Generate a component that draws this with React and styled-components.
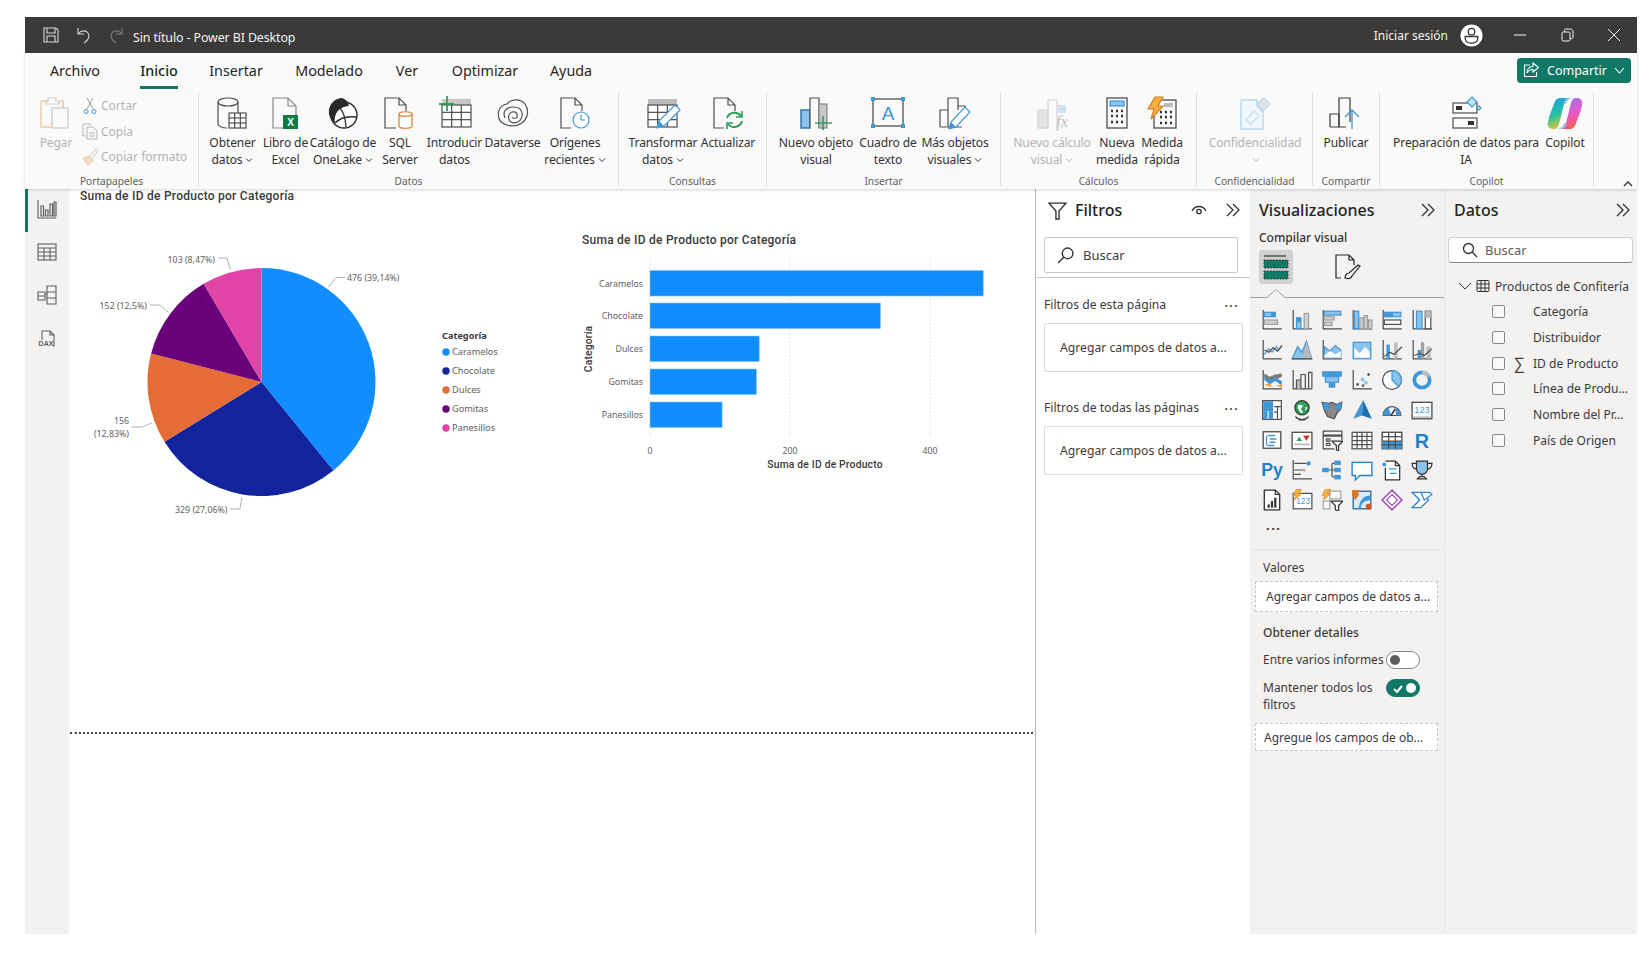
import React from 'react';
import styled, { createGlobalStyle } from 'styled-components';

const INK = '#4f4e4d';
const BLUE = '#3f97d8';
const LIGHT = '#8cc3ec';
const GREEN = '#117865';

const GlobalStyle = createGlobalStyle`
  html, body { margin: 0; padding: 0; background: #fff; }
  body { font-family: "Noto Sans", "Open Sans", "Liberation Sans", sans-serif; color: #252423; }
  * { box-sizing: border-box; }
`;

const Page = styled.div`
  width: 1650px;
  height: 956px;
  padding: 17px 13px 22px 25px;
  display: flex;
  flex-direction: column;
`;

/* ---- title bar ---- */
const TitleBar = styled.header`
  height: 36px;
  flex: none;
  background: #3b3a39;
  color: #f3f2f1;
  display: flex;
  align-items: center;
  padding-left: 17px;
  font-size: 12.4px;
`;
const QuickIcon = styled.svg`
  width: 18px;
  height: 18px;
  margin-right: ${p => p.$gap}px;
  fill: none;
  stroke: ${p => (p.$dim ? '#7d7b79' : '#d8d6d4')};
  stroke-width: 1.1;
`;
const DocTitle = styled.span`
  letter-spacing: -0.1px;
  padding-top: 4px;
`;
const Account = styled.div`
  margin-left: auto;
  display: flex;
  align-items: center;
`;
const SignIn = styled.span`
  margin-right: 12px;
  padding-top: 1px;
  font-size: 12px;
`;
const Avatar = styled.svg`
  width: 23px;
  height: 23px;
  margin-right: 30px;
`;
const WinIcon = styled.svg`
  width: 14px;
  height: 14px;
  margin-right: ${p => p.$gap}px;
  fill: none;
  stroke: #f3f2f1;
  stroke-width: 1;
`;

/* ---- ribbon ---- */
const Header = styled.div`
  flex: none;
  height: 136px;
  background: #fafafa;
  box-shadow: 0 1px 3px rgba(0, 0, 0, 0.18);
  position: relative;
  z-index: 2;
  display: flex;
  flex-direction: column;
`;
const TabRow = styled.nav`
  height: 39px;
  display: flex;
  align-items: center;
  padding-left: 5px;
  padding-right: 6px;
  flex: none;
`;
const Tab = styled.div`
  width: ${p => p.$w}px;
  display: flex;
  justify-content: center;
  font-size: 14.3px;
  padding-top: 3px;
`;
const TabLabel = styled.span`
  line-height: 24px;
  height: 30px;
  font-weight: ${p => (p.$active ? 500 : 400)};
  border-bottom: 3px solid ${p => (p.$active ? GREEN : 'transparent')};
`;
const ShareButton = styled.button`
  margin-left: auto;
  width: 114px;
  height: 25px;
  margin-top: -5px;
  border: 0;
  border-radius: 4px;
  background: ${GREEN};
  color: #fff;
  font: inherit;
  font-size: 12.5px;
  display: flex;
  align-items: center;
  justify-content: center;
  gap: 7px;
`;
const Ribbon = styled.div`
  flex: 1;
  display: flex;
`;
const Group = styled.section`
  width: ${p => p.$w}px;
  height: 94px;
  flex: none;
  border-right: 1px solid #e1dfdd;
  padding-left: 8px;
  display: flex;
  flex-direction: column;
`;
const GroupRow = styled.div`
  display: flex;
  padding-top: 4px;
`;
const GroupLabel = styled.div`
  margin-top: auto;
  margin-left: -8px;
  height: 14px;
  line-height: 14px;
  font-size: 10.2px;
  color: #605e5c;
  text-align: center;
  transform: translateY(2px);
`;
const BigButton = styled.div`
  width: ${p => p.$w}px;
  flex: none;
  display: flex;
  flex-direction: column;
  align-items: center;
  color: ${p => (p.$off ? '#b5b3b1' : '#323130')};
`;
const BigIcon = styled.svg`
  width: 36px;
  height: 36px;
  fill: none;
  stroke-width: 1.2;
  flex: none;
`;
const BigLabel = styled.div`
  margin-top: 2px;
  font-size: 12.1px;
  line-height: 17px;
  text-align: center;
  white-space: nowrap;
  letter-spacing: -0.15px;
`;
const Caret = styled.svg`
  width: 8px;
  height: 6px;
  margin-left: 3px;
  vertical-align: 1px;
  fill: none;
  stroke: currentColor;
  stroke-width: 1;
`;
const SmallStack = styled.div`
  margin-left: 3px;
  margin-top: -3px;
  display: flex;
  flex-direction: column;
`;
const SmallButton = styled.div`
  height: 25.5px;
  display: flex;
  align-items: center;
  gap: 3px;
  font-size: 12px;
  color: #b5b3b1;
  white-space: nowrap;
`;
const SmallIcon = styled.svg`
  width: 16px;
  height: 18px;
  fill: none;
  stroke-width: 1;
`;
const Collapse = styled.div`
  flex: 1;
  display: flex;
  align-items: flex-end;
  justify-content: flex-end;
  padding: 0 4px 2px 0;
`;
const CollapseIcon = styled.svg`
  width: 10px;
  height: 7px;
  fill: none;
  stroke: #323130;
  stroke-width: 1.4;
`;

/* ---- body ---- */
const Body = styled.main`
  flex: 1;
  display: flex;
  min-height: 0;
`;
const Rail = styled.aside`
  width: 44px;
  flex: none;
  background: #f3f2f1;
  display: flex;
  flex-direction: column;
`;
const RailItem = styled.div`
  height: 43px;
  padding: 0 3px 3px 0;
  display: flex;
  align-items: center;
  justify-content: center;
  border-left: 3px solid ${p => (p.$active ? GREEN : 'transparent')};
`;
const RailIcon = styled.svg`
  width: 22px;
  height: 22px;
  fill: none;
  stroke: #605e5c;
  stroke-width: 1.1;
`;
const Canvas = styled.div`
  width: 966px;
  flex: none;
  background: #fff;
  display: flex;
  flex-direction: column;
`;
const VisualTitle = styled.div`
  font-family: Roboto, "Noto Sans", sans-serif;
  font-size: 12px;
  font-weight: 500;
  line-height: 14px;
  letter-spacing: 0.25px;
  color: #3b3a39;
  margin-left: ${p => p.$left}px;
`;
const Charts = styled.div`
  display: flex;
  height: 320px;
`;
const PieSvg = styled.svg`
  width: 491px;
  height: 320px;
  flex: none;
  display: block;
`;
const BarVisual = styled.div`
  padding-top: 30px;
  flex: 1;
`;
const BarSvg = styled.svg`
  width: 470px;
  height: 225px;
  margin-top: 3px;
  display: block;
`;
const PageEnd = styled.div`
  margin: 209px 2px 0 1px;
  border-top: 2px dotted #444;
`;

/* ---- filters ---- */
const FilterPane = styled.aside`
  width: 215px;
  flex: none;
  background: #fff;
  border-left: 1px solid #b9b7b5;
  display: flex;
  flex-direction: column;
`;
const PaneHead = styled.div`
  height: 42px;
  padding: 0 ${p => p.$right || 9}px 0 ${p => p.$left}px;
  display: flex;
  align-items: center;
  font-size: 16px;
  font-weight: 500;
  flex: none;
`;
const HeadIcon = styled.svg`
  width: ${p => p.$size || 16}px;
  height: ${p => p.$size || 16}px;
  flex: none;
  fill: none;
  stroke: #323130;
  stroke-width: 1.3;
  margin-left: ${p => (p.$push ? 'auto' : '0')};
  margin-right: ${p => p.$gap || 0}px;
`;
const FilterSearch = styled.div`
  margin: 6px 12px 4px 8px;
  height: 36px;
  border: 1px solid #c8c6c4;
  border-radius: 2px;
  display: flex;
  align-items: center;
  gap: 9px;
  padding-left: 12px;
  font-size: 13px;
  color: #3b3a39;
`;
const Divider = styled.div`
  border-top: 1px solid #c8c6c4;
`;
const FilterHeading = styled.div`
  margin: ${p => p.$top}px 11px 0 8px;
  height: 20px;
  line-height: 20px;
  display: flex;
  justify-content: space-between;
  font-size: 12.2px;
  color: #3b3a39;
`;
const HeadingDots = styled.span`
  letter-spacing: 1.5px;
  font-weight: 600;
  line-height: 16px;
`;
const FilterCard = styled.div`
  margin: 8px 7px 0 8px;
  height: 49px;
  border: 1px solid #dcdad8;
  border-radius: 2px;
  padding-left: 15px;
  display: flex;
  align-items: center;
  font-size: 12.2px;
  color: #3b3a39;
  white-space: nowrap;
`;

/* ---- visualizations ---- */
const VizPane = styled.aside`
  width: 195px;
  flex: none;
  background: #f3f2f1;
  border-right: 1px solid #e8e6e4;
  display: flex;
  flex-direction: column;
`;
const Subhead = styled.div`
  margin: -1px 0 0 9px;
  height: 16px;
  line-height: 16px;
  font-size: 12px;
  font-weight: 500;
  color: #323130;
`;
const ModeTabs = styled.div`
  display: flex;
  margin: 4px 0 0 9px;
  height: 34px;
  align-items: center;
  flex: none;
`;
const ModeTile = styled.div`
  width: 34px;
  height: 34px;
  background: #d2d0ce;
  border-radius: 3px;
  display: flex;
  align-items: center;
  justify-content: center;
`;
const ModeIcon = styled.svg`
  width: ${p => p.$size}px;
  height: ${p => p.$size}px;
  fill: none;
  margin-left: ${p => p.$left || 0}px;
`;
const Notch = styled.svg`
  display: block;
  width: 194px;
  height: 10px;
  margin-top: 4px;
  flex: none;
  fill: none;
  stroke: #a19f9d;
  stroke-width: 1;
`;
const Gallery = styled.div`
  display: grid;
  grid-template-columns: repeat(6, 30px);
  grid-auto-rows: 30px;
  padding: 7px 0 0 7px;
  justify-items: center;
  align-items: center;
`;
const GalleryIcon = styled.svg`
  width: 22px;
  height: 22px;
  fill: none;
  stroke-width: 1.1;
`;
const MoreDots = styled.div`
  margin: -1px 0 0 16px;
  height: 26px;
  line-height: 22px;
  font-size: 13px;
  letter-spacing: 1.5px;
  color: #323130;
  font-weight: 700;
`;
const WellsRule = styled.div`
  border-top: 2px solid #edebe9;
  margin-top: 9px;
`;
const WellLabel = styled.div`
  margin: ${p => p.$top}px 0 0 13px;
  font-size: 12px;
  line-height: 17px;
  font-weight: ${p => (p.$bold ? 500 : 400)};
  color: #3b3a39;
`;
const Well = styled.div`
  margin: ${p => p.$top}px 6px 0 5px;
  height: ${p => p.$h}px;
  background: #fff;
  border: 1px dashed #c8c6c4;
  border-radius: 1px;
  display: flex;
  align-items: center;
  padding-left: ${p => p.$pad}px;
  font-size: 12px;
  color: #3b3a39;
  white-space: nowrap;
`;
const SwitchRow = styled.div`
  margin: ${p => p.$top}px 0 0 13px;
  width: 157px;
  display: flex;
  justify-content: space-between;
  font-size: 12px;
  line-height: 17px;
  color: #3b3a39;
`;
const SwitchText = styled.span`
  width: 122px;
  white-space: ${p => (p.$wrap ? 'normal' : 'nowrap')};
`;
const Switch = styled.span`
  width: 34px;
  height: 18px;
  flex: none;
  border-radius: 9px;
  border: 1px solid ${p => (p.$on ? GREEN : '#8a8886')};
  background: ${p => (p.$on ? GREEN : '#fff')};
  display: flex;
  align-items: center;
  justify-content: ${p => (p.$on ? 'flex-end' : 'flex-start')};
  gap: 3px;
  padding: 0 3px;
  &::after {
    content: '';
    width: 10px;
    height: 10px;
    border-radius: 50%;
    background: ${p => (p.$on ? '#fff' : '#605e5c')};
  }
`;
const SwitchCheck = styled.svg`
  width: 10px;
  height: 9px;
  fill: none;
  stroke: #fff;
  stroke-width: 2;
`;

/* ---- data ---- */
const DataPane = styled.aside`
  flex: 1;
  background: #f3f2f1;
  display: flex;
  flex-direction: column;
`;
const DataSearch = styled.div`
  margin: 6px 4px 0 3px;
  height: 26px;
  background: #fff;
  border: 1px solid #d2d0ce;
  border-bottom-color: #8a8886;
  border-radius: 4px;
  display: flex;
  align-items: center;
  gap: 7px;
  padding-left: 13px;
  font-size: 13px;
  color: #605e5c;
`;
const TableRow = styled.div`
  margin-top: 10px;
  height: 26px;
  padding-left: 13px;
  display: flex;
  align-items: center;
  font-size: 12.1px;
  color: #3b3a39;
  white-space: nowrap;
`;
const TreeIcon = styled.svg`
  width: 14px;
  height: 14px;
  flex: none;
  fill: none;
  stroke: #323130;
  stroke-width: 1;
  margin-right: ${p => p.$gap}px;
`;
const FieldRow = styled.div`
  height: 25.7px;
  padding-left: 47px;
  display: flex;
  align-items: center;
  font-size: 12.1px;
  color: #3b3a39;
  white-space: nowrap;
`;
const Check = styled.span`
  width: 13px;
  height: 13px;
  flex: none;
  border: 1px solid #8a8886;
  border-radius: 2px;
  background: #f9f8f7;
`;
const SigmaSlot = styled.span`
  width: 28px;
  flex: none;
  text-align: center;
  font-size: 16px;
  line-height: 16px;
`;

/* ---- small shared drawings ---- */
const Down = () => (
  <Caret viewBox="0 0 8 6"><path d="M1 1.5l3 3 3-3" /></Caret>
);
const Chevrons = ({ push, gap }) => (
  <HeadIcon viewBox="0 0 16 16" $push={push} $gap={gap}>
    <path d="M2 2l6 6-6 6M8 2l6 6-6 6" />
  </HeadIcon>
);
const Lens = ({ flip }) => (
  <HeadIcon viewBox="0 0 16 16" $size={flip ? 17 : 16}>
    {flip ? <><circle cx="10" cy="6" r="5" /><path d="M6.4 9.6L1 15" /></> : <><circle cx="6.5" cy="6.5" r="5" /><path d="M10 10l5 5" /></>}
  </HeadIcon>
);

const page = 'M5 2h15l8 8v22H5z';
const fold = 'M20 2v8h8';
const GridLines = ({ x, y, w, h, c = INK, nx = 3, ny = 3 }) => (
  <g stroke={c}>
    <rect x={x} y={y} width={w} height={h} fill="#fff" />
    {Array.from({ length: nx - 1 }, (_, i) => <path key={i} d={`M${x + (w / nx) * (i + 1)} ${y}v${h}`} />)}
    {Array.from({ length: ny - 1 }, (_, i) => <path key={i} d={`M${x} ${y + (h / ny) * (i + 1)}h${w}`} />)}
  </g>
);

const ribbonIcons = {
  paste: (
    <>
      <path d="M3 5h8M21 5h4v7M3 5v26h12" stroke="#f0d9b8" strokeWidth="2" />
      <path d="M10 5V2h8v3h3v3H8V5z" stroke="#cfcdcb" />
      <rect x="14" y="12" width="16" height="20" stroke="#c8c6c4" fill="#fafafa" />
    </>
  ),
  data: (
    <>
      <ellipse cx="13" cy="6" rx="10" ry="4" stroke={INK} />
      <path d="M3 6v22c0 2 4 4 9 4M23 6v11" stroke={INK} />
      <GridLines x={14} y={17} w={17} h={15} />
    </>
  ),
  excel: (
    <>
      <path d={page} stroke="#8a8886" /><path d={fold} stroke="#8a8886" />
      <rect x="15" y="19" width="15" height="14" fill="#107c41" />
      <text x="22.5" y="30" fontSize="10" fontWeight="700" fill="#fff" textAnchor="middle" fontFamily="Liberation Sans">X</text>
    </>
  ),
  lake: (
    <>
      <circle cx="19" cy="19" r="13" stroke="#2b2a29" strokeWidth="1.4" fill="#fff" />
      <path d="M16 2C8 3 3 10 4 18c1 5 3 8 6 9-1-6 1-11 5-14 3-2 6-3 9-3-1-4-4-8-8-8z" fill="#2b2a29" />
      <path d="M13 11c4 2 7 7 8 20M10 27c5-5 12-7 21-6" stroke="#2b2a29" strokeWidth="1.3" />
    </>
  ),
  sql: (
    <>
      <path d="M14 32H3V2h14l7 7v6M17 2v7h7" stroke={INK} />
      <path d="M17 18c0-3 13-3 13 0v12c0 3-13 3-13 0z" stroke="#d67f2c" fill="#fff" />
      <path d="M17 18c0 3 13 3 13 0" stroke="#d67f2c" />
    </>
  ),
  enter: (
    <>
      <rect x="5" y="3" width="29" height="6" fill="#c8c6c4" />
      <GridLines x={5} y={9} w={29} h={22} />
      <path d="M10 0v15M2 8h15" stroke="#2e9e58" strokeWidth="1.8" />
    </>
  ),
  verse: (
    <g stroke={INK}>
      <path d="M6 26C1 20 3 9 12 8c5-6 14-5 18 0 5 7 2 15-3 19-6 4-15 4-21-1z" />
      <path d="M10 22c-3-7 2-11 8-11 7 0 10 4 9 9-1 6-7 8-11 6-3-2-4-8 1-10 4-1 6 2 5 5-1 2-4 2-5 0" />
    </g>
  ),
  recent: (
    <>
      <path d="M14 32H4V2h14l7 7v6M18 2v7h7" stroke={INK} />
      <circle cx="24" cy="24" r="8" stroke={BLUE} fill="#fff" />
      <path d="M24 19v5h4" stroke={BLUE} />
    </>
  ),
  transform: (
    <>
      <rect x="3" y="3" width="29" height="6" fill="#bdbbb9" />
      <GridLines x={3} y={9} w={29} h={22} />
      <path d="M12 32l2-7 16-16 5 5-16 16z" fill="#fff" stroke={BLUE} />
      <path d="M12 32l2-7 5 5z" fill={BLUE} />
    </>
  ),
  refresh: (
    <>
      <path d="M14 32H4V2h14l7 7v6M18 2v7h7" stroke={INK} />
      <path d="M17 22a8 8 0 0 1 14-2M32 25a8 8 0 0 1-14 3" stroke="#2e9e58" strokeWidth="2" />
      <path d="M32 15v6h-6M17 33v-6h6" stroke="#2e9e58" strokeWidth="1.6" />
    </>
  ),
  newVisual: (
    <>
      <rect x="3" y="14" width="9" height="18" fill={LIGHT} stroke="#2b6fa8" strokeWidth="1.4" />
      <path d="M12 32V2h9v30" stroke={INK} fill="#fafafa" />
      <rect x="21" y="8" width="8" height="24" fill="#c8c6c4" stroke="#8a8886" />
      <path d="M25 20v14M17 27h17" stroke="#2e9e58" strokeWidth="1.6" />
    </>
  ),
  textBox: (
    <>
      <rect x="3" y="3" width="30" height="27" stroke={INK} strokeWidth="1.3" />
      <rect x="1" y="1" width="4" height="4" fill={BLUE} /><rect x="31" y="1" width="4" height="4" fill={BLUE} />
      <rect x="1" y="28" width="4" height="4" fill={BLUE} /><rect x="31" y="28" width="4" height="4" fill={BLUE} />
      <text x="18" y="24" fontSize="19" fill={BLUE} textAnchor="middle" fontFamily="Liberation Sans">A</text>
    </>
  ),
  moreVisuals: (
    <>
      <path d="M3 31V14h8M11 31V2h10v12M21 10h7v8M3 31h22" stroke={INK} />
      <path d="M12 33l2-7 14-15 5 5-14 15z" fill="#fff" stroke={BLUE} />
      <path d="M12 33l2-7 5 5z" fill={BLUE} />
    </>
  ),
  fx: (
    <>
      <rect x="4" y="14" width="10" height="18" fill="#e1dfdd" stroke="#d2d0ce" />
      <path d="M14 32V4h9v28" stroke="#d2d0ce" />
      <rect x="23" y="9" width="9" height="8" fill="#c7e0f4" />
      <text x="28" y="31" fontSize="16" fontStyle="italic" fill="#b5b3b1" textAnchor="middle" fontFamily="Liberation Serif">fx</text>
    </>
  ),
  calc: (
    <>
      <rect x="8" y="2" width="20" height="30" stroke={INK} strokeWidth="1.3" />
      <rect x="11" y="5" width="14" height="5" fill={LIGHT} stroke={BLUE} />
      <path d="M12 15h2M17 15h2M22 15h2M12 20h2M17 20h2M22 20h2M12 26h2M17 26h2M22 26h2" stroke="#323130" strokeWidth="2.4" />
    </>
  ),
  quick: (
    <>
      <rect x="10" y="4" width="22" height="28" stroke={INK} strokeWidth="1.3" />
      <rect x="20" y="7" width="9" height="4" fill="#bdbbb9" />
      <path d="M16 16h2M21 16h2M26 16h2M16 21h2M21 21h2M26 21h2M16 27h2M21 27h2M26 27h2" stroke="#323130" strokeWidth="2.4" />
      <path d="M11 1h8l-5 9h5L7 23l3-10H4z" fill="#f5b041" stroke="#d67f2c" />
    </>
  ),
  label: (
    <>
      <path d="M4 4h16v6l6 6v17H4z" stroke="#a9d3f2" fill="#f0f7fd" strokeWidth="1.4" />
      <path d="M9 24l8-9 5 5-8 8z" stroke="#bcdcf5" strokeWidth="1.4" />
      <path d="M20 8l7-6 6 6-7 7z" fill="#e1dfdd" stroke="#a9d3f2" />
    </>
  ),
  publish: (
    <>
      <path d="M2 31V18h9M11 31V2h11v24M2 31h16" stroke="#3b3a39" strokeWidth="1.2" />
      <path d="M11 18v13" stroke="#3b3a39" strokeWidth="1.2" />
      <path d="M24 33V14M17 21l7-7 7 7" stroke={BLUE} strokeWidth="1.3" />
    </>
  ),
  prep: (
    <>
      <rect x="5" y="7" width="24" height="10" stroke={INK} /><rect x="8" y="10" width="6" height="4" fill="#323130" />
      <rect x="5" y="22" width="24" height="10" stroke={INK} /><rect x="20" y="25" width="6" height="4" fill="#323130" />
      <path d="M24 1l5 5-5 5-5-5z" fill="#c7e0f4" stroke={BLUE} />
      <path d="M31 10l2 2-2 2-2-2z" fill="#fff" stroke={BLUE} />
    </>
  ),
  copilot: (
    <>
      <defs>
        <linearGradient id="copL" x1="0.2" y1="0" x2="0.5" y2="1">
          <stop offset="0" stopColor="#1f9fe8" /><stop offset="0.55" stopColor="#25c2a0" /><stop offset="1" stopColor="#f6c42c" />
        </linearGradient>
        <linearGradient id="copR" x1="0.3" y1="0" x2="0.6" y2="1">
          <stop offset="0" stopColor="#9b6cf0" /><stop offset="0.55" stopColor="#e85bc3" /><stop offset="1" stopColor="#f5603c" />
        </linearGradient>
      </defs>
      <path d="M14 2h8c-3 1-4 3-5 6l-5 20c-1 3-2 5-5 5H6c-4 0-6-3-5-7 1-6 4-13 6-18 1-4 3-6 7-6z" fill="url(#copL)" />
      <path d="M22 33h-8c3-1 4-3 5-6l5-20c1-3 2-5 5-5h1c4 0 6 3 5 7-1 6-4 13-6 18-1 4-3 6-7 6z" fill="url(#copR)" />
      <path d="M19 8c1-3 3-5 6-6h-3c-3 0-5 2-6 5zM17 27c-1 3-3 5-6 6h3c3 0 5-2 6-5z" fill="#7fb7f0" opacity="0.7" />
    </>
  ),
};

const Big = ({ w, icon, lines, caret, off }) => (
  <BigButton $w={w} $off={off}>
    <BigIcon viewBox="0 0 36 36" opacity={off ? 0.85 : 1}>{ribbonIcons[icon]}</BigIcon>
    <BigLabel>
      {lines.map((line, i) => (
        <div key={line}>
          {line}
          {caret && i === lines.length - 1 && <Down />}
        </div>
      ))}
    </BigLabel>
  </BigButton>
);

const tabs = [
  ['Archivo', 90], ['Inicio', 78], ['Insertar', 76], ['Modelado', 110], ['Ver', 46], ['Optimizar', 110], ['Ayuda', 62],
];

const groups = [
  {
    name: 'Datos', w: 420, buttons: [
      { w: 51, icon: 'data', lines: ['Obtener', 'datos'], caret: true },
      { w: 55, icon: 'excel', lines: ['Libro de', 'Excel'] },
      { w: 60, icon: 'lake', lines: ['Catálogo de', 'OneLake'], caret: true },
      { w: 54, icon: 'sql', lines: ['SQL', 'Server'] },
      { w: 55, icon: 'enter', lines: ['Introducir', 'datos'] },
      { w: 61, icon: 'verse', lines: ['Dataverse'] },
      { w: 64, icon: 'recent', lines: ['Orígenes', 'recientes'], caret: true },
    ],
  },
  {
    name: 'Consultas', w: 148, buttons: [
      { w: 72, icon: 'transform', lines: ['Transformar', 'datos'], caret: true },
      { w: 58, icon: 'refresh', lines: ['Actualizar'] },
    ],
  },
  {
    name: 'Insertar', w: 234, buttons: [
      { w: 82, icon: 'newVisual', lines: ['Nuevo objeto', 'visual'] },
      { w: 62, icon: 'textBox', lines: ['Cuadro de', 'texto'] },
      { w: 72, icon: 'moreVisuals', lines: ['Más objetos', 'visuales'], caret: true },
    ],
  },
  {
    name: 'Cálculos', w: 196, buttons: [
      { w: 86, icon: 'fx', lines: ['Nuevo cálculo', 'visual'], caret: true, off: true },
      { w: 44, icon: 'calc', lines: ['Nueva', 'medida'] },
      { w: 46, icon: 'quick', lines: ['Medida', 'rápida'] },
    ],
  },
  {
    name: 'Confidencialidad', w: 116, buttons: [
      { w: 100, icon: 'label', lines: ['Confidencialidad', ''], caret: true, off: true },
    ],
  },
  {
    name: 'Compartir', w: 67, buttons: [
      { w: 50, icon: 'publish', lines: ['Publicar'] },
    ],
  },
  {
    name: 'Copilot', w: 214, buttons: [
      { w: 156, icon: 'prep', lines: ['Preparación de datos para', 'IA'] },
      { w: 42, icon: 'copilot', lines: ['Copilot'] },
    ],
  },
];

/* pie chart */
const slices = [
  { name: 'Caramelos', value: 476, color: '#118DFF' },
  { name: 'Chocolate', value: 329, color: '#12239E' },
  { name: 'Dulces', value: 156, color: '#E66C37' },
  { name: 'Gomitas', value: 152, color: '#6B007B' },
  { name: 'Panesillos', value: 103, color: '#E044A7' },
];
const total = slices.reduce((s, x) => s + x.value, 0);
const CX = 261.5;
const CY = 382;
const R = 114;
let acc = 0;
const arcs = slices.map(s => {
  const a0 = (acc / total) * Math.PI * 2;
  acc += s.value;
  const a1 = (acc / total) * Math.PI * 2;
  const pt = a => `${(CX + R * Math.sin(a)).toFixed(2)} ${(CY - R * Math.cos(a)).toFixed(2)}`;
  return { ...s, d: `M${CX} ${CY}L${pt(a0)}A${R} ${R} 0 ${a1 - a0 > Math.PI ? 1 : 0} 1 ${pt(a1)}Z` };
});
const legendY = [352, 371, 390, 409, 428];
const pieLabels = [
  { t: '476 (39,14%)', x: 347, y: 281, a: 'start', l: 'M328.4 287L336 277.5H345' },
  { t: '103 (8,47%)', x: 215, y: 263, a: 'end', l: 'M218 258H227L230.5 270' },
  { t: '152 (12,5%)', x: 147, y: 309, a: 'end', l: 'M150 305H160L168 312' },
  { t: '156', x: 129, y: 424, a: 'end', l: 'M131.5 427H141.6L152 423' },
  { t: '(12,83%)', x: 129, y: 437, a: 'end' },
  { t: '329 (27,06%)', x: 227.5, y: 513, a: 'end', l: 'M230 509H240L242 497' },
];

/* bar chart */
const barTop = [270.5, 303, 336, 369, 402];
const barScale = 0.7;

const chartFont = '"Noto Sans", "Open Sans", sans-serif';

const PieChart = () => (
  <PieSvg viewBox="69 203 491 320" fontFamily={chartFont}>
    {arcs.map(a => <path key={a.name} d={a.d} fill={a.color} />)}
    {pieLabels.map(l => (
      <g key={l.t}>
        {l.l && <path d={l.l} fill="none" stroke="#a19f9d" strokeWidth="0.8" />}
        <text x={l.x} y={l.y} fontSize="8.8" fill="#605e5c" textAnchor={l.a}>{l.t}</text>
      </g>
    ))}
    <text x="442" y="339" fontSize="9.2" fontWeight="700" fill="#3b3a39">Categoría</text>
    {arcs.map((a, i) => (
      <g key={a.name}>
        <circle cx="446" cy={legendY[i]} r="3.7" fill={a.color} />
        <text x="452" y={legendY[i] + 3} fontSize="9.2" fill="#605e5c">{a.name}</text>
      </g>
    ))}
  </PieSvg>
);

const BarChart = () => (
  <BarSvg viewBox="560 250 470 225" fontFamily={chartFont}>
    {[0, 200, 400].map(v => (
      <g key={v}>
        <path d={`M${650 + v * barScale} 257V438`} stroke="#d6d4d2" strokeWidth="0.8" strokeDasharray="1.5 2" />
        <text x={650 + v * barScale} y="454" fontSize="8.8" fill="#605e5c" textAnchor="middle">{v}</text>
      </g>
    ))}
    {slices.map((s, i) => (
      <g key={s.name}>
        <rect x="650" y={barTop[i]} width={s.value * barScale} height="25.5" fill="#118DFF" stroke="#7fc2ff" strokeWidth="0.6" />
        <text x="643" y={barTop[i] + 16} fontSize="8.8" fill="#605e5c" textAnchor="end">{s.name}</text>
      </g>
    ))}
    <text x="825" y="468" fontSize="10.3" fontWeight="500" fill="#3b3a39" textAnchor="middle" fontFamily="Roboto, sans-serif" letterSpacing="0.2">Suma de ID de Producto</text>
    <text transform="translate(592 349) rotate(-90)" fontSize="10.3" fontWeight="500" fill="#3b3a39" textAnchor="middle" fontFamily="Roboto, sans-serif" letterSpacing="0.2">Categoría</text>
  </BarSvg>
);

/* gallery */
const axis = <path d="M2 1v17h17" stroke={INK} />;
const box = <rect x="2" y="2.5" width="16" height="15" stroke={INK} strokeWidth="1.2" fill="#fff" />;
const Rect = ({ x, y, w, h, c = BLUE, s }) => <rect x={x} y={y} width={w} height={h} fill={c} stroke={s} />;
const gallery = [
  <>{axis}<Rect x={3} y={3} w={10} h={4} c={LIGHT} s={BLUE} /><Rect x={9} y={3} w={4} h={4} /><Rect x={3} y={10} w={12} h={4} c="#d2d0ce" s="#a19f9d" /></>,
  <>{axis}<Rect x={5} y={8} w={4} h={10} c={LIGHT} s={BLUE} /><Rect x={5} y={8} w={4} h={4} /><Rect x={12} y={4} w={4} h={14} c="#d2d0ce" s="#a19f9d" /></>,
  <>{axis}<Rect x={3} y={2} w={15} h={3.5} c={LIGHT} s={BLUE} /><Rect x={3} y={7} w={9} h={3} c="#d2d0ce" s="#a19f9d" /><Rect x={3} y={12} w={7} h={3} c="#d2d0ce" s="#a19f9d" /></>,
  <>{axis}<Rect x={3} y={2} w={4} h={16} c={LIGHT} s={BLUE} /><Rect x={8} y={8} w={3} h={10} c="#d2d0ce" s="#a19f9d" /><Rect x={12} y={6} w={3} h={12} c="#d2d0ce" s="#a19f9d" /><Rect x={16} y={10} w={3} h={8} c="#d2d0ce" s="#a19f9d" /></>,
  <>{axis}<Rect x={3} y={3} w={15} h={4} c={LIGHT} s={BLUE} /><Rect x={3} y={10} w={15} h={4} c="#fff" s={INK} /><Rect x={3} y={3} w={8} h={4} /></>,
  <>{axis}<Rect x={5} y={2} w={5} h={16} c={LIGHT} s={BLUE} /><Rect x={13} y={2} w={5} h={16} c="#fff" s={INK} /><Rect x={13} y={2} w={5} h={6} c="#bdbbb9" /></>,

  <>{axis}<path d="M3 14l4-5 3 3 4-5 2 3 3-4" stroke={BLUE} /><path d="M3 10l4 2 4-4 4 3 4-5" stroke={INK} /></>,
  <><path d="M1 18L6 7l4 5 4-10 5 16z" fill={LIGHT} stroke={BLUE} /><path d="M11 18l3-16 5 16z" fill="#bdbbb9" /><path d="M1 18h18" stroke={INK} /></>,
  <>{axis}<path d="M3 7l5 4 5-5 5 4v7H3z" fill={LIGHT} stroke={BLUE} /><path d="M3 15l5-4 5 3 5-3v6H3z" fill="#fff" /></>,
  <><rect x="2" y="3" width="16" height="15" fill={LIGHT} stroke={BLUE} /><path d="M3 17V8l5 5 5-6 4 5v5z" fill="#fff" /></>,
  <>{axis}<Rect x={5} y={5} w={3} h={13} c={BLUE} /><Rect x={12} y={3} w={3} h={15} c="#bdbbb9" /><path d="M3 16l5-4 4 2 7-7" stroke={INK} /></>,
  <>{axis}<Rect x={6} y={10} w={3} h={8} c={BLUE} /><Rect x={9} y={3} w={3} h={15} c="#a19f9d" /><Rect x={14} y={7} w={4} h={11} c="#bdbbb9" /><path d="M3 15l5-2 4 2 7-6" stroke={INK} /></>,

  <>{axis}<path d="M3 4l5 3 5-2 6-1v3l-6 3-5 2-5-4z" fill="#7d7b79" /><path d="M3 10l5 4 5-3 6 4v-4l-6-3-5 2-5-3z" fill={BLUE} /><path d="M3 14l4 2h3l-2-3zM14 15l5 2v-3z" fill="#f0a030" /></>,
  <>{axis}<Rect x={5} y={10} w={4} h={8} c="#bdbbb9" /><path d="M5 18v-8h4v-5h4v13M9 18v-8M16 18V3h3v15" stroke={INK} /></>,
  <><Rect x={1} y={2} w={18} h={5} /><Rect x={4} y={7} w={12} h={5} c={LIGHT} s={BLUE} /><Rect x={7} y={12} w={6} h={5} /></>,
  <>{axis}<Rect x={5} y={13} w={2} h={2} c="#323130" /><Rect x={9} y={8} w={3} h={3} c={LIGHT} /><Rect x={12} y={11} w={3} h={3} c={LIGHT} /><Rect x={15} y={4} w={2} h={2} c="#323130" /><Rect x={10} y={14} w={2} h={2} c={INK} /></>,
  <><circle cx="10" cy="10" r="8.5" stroke={INK} strokeWidth="1.2" fill="#fff" /><path d="M10 10V1.5A8.5 8.5 0 0 1 16 16z" fill={LIGHT} stroke={BLUE} /></>,
  <><circle cx="10" cy="10" r="7" stroke={BLUE} strokeWidth="3.4" /><path d="M10 3a7 7 0 0 1 6 4" stroke="#bdbbb9" strokeWidth="3.4" /></>,

  <><rect x="1.5" y="1.5" width="17" height="17" stroke={INK} fill="#fff" /><Rect x={2} y={2} w={9} h={9} /><Rect x={2} y={11} w={4} h={7} /><Rect x={7} y={11} w={4} h={7} /><path d="M12 7h6M15 7v11M12 12h3" stroke={INK} /></>,
  <><circle cx="10" cy="8" r="6.5" fill="#2e9e58" stroke="#3b3a39" /><path d="M7 5l4 1-2 3 2 3-2 1-3-5zM13 7l2 1-2 3z" fill="#fff" /><path d="M4 16a8 8 0 0 0 12 0M7 19h6" stroke="#3b3a39" /></>,
  <><path d="M1 3l6 1 3-1 4 2 5-2-1 6-3 3-3 6-6-2-3-6z" fill="#8a8886" stroke={INK} /><path d="M1 3l6 1 1 5-5 1zM14 5l5-2-1 6-4 2z" fill={BLUE} /></>,
  <><path d="M11 1L2 18l8-3z" fill={BLUE} /><path d="M11 1l8 17-9-3z" fill="#1a6fb5" /></>,
  <><path d="M2 15a8 8 0 0 1 16 0z" stroke={INK} /><path d="M2 15a8 8 0 0 1 5-7l2 7z" fill={BLUE} /><path d="M13 8a8 8 0 0 1 5 7h-4z" fill={BLUE} /><path d="M9 15l4-6" stroke="#323130" strokeWidth="1.4" /></>,
  <><rect x="1" y="3" width="18" height="15" stroke={INK} strokeWidth="1.2" fill="#fff" /><text x="10" y="13" fontSize="8.5" fill={BLUE} textAnchor="middle" fontFamily="Liberation Sans">123</text><path d="M2 16.5h16" stroke="#bdbbb9" strokeWidth="1.4" /></>,

  <>{box}<path d="M6 6h7M8 9h6M8 12h5M6 15h6" stroke={BLUE} strokeWidth="1.4" /><path d="M5 6v9" stroke={BLUE} /></>,
  <><rect x="1" y="3" width="18" height="15" stroke={INK} strokeWidth="1.2" fill="#fff" /><path d="M5 11l2.5-4L10 11z" fill="#2e9e58" /><path d="M11 6h6l-3 5z" fill="#d13438" /><path d="M3 14h14" stroke="#bdbbb9" strokeWidth="1.6" /></>,
  <><path d="M12 18H2V2h17v8" stroke={INK} /><path d="M2 6h17" stroke={INK} strokeWidth="2" /><path d="M5 9h3v2H5zM5 13h3v2H5z" stroke={INK} /><path d="M10 11h10l-4 4v5l-2-1v-4z" fill="#fff" stroke="#323130" /></>,
  <GridLines x={1} y={3} w={18} h={15} nx={4} ny={4} />,
  <><rect x="1" y="3" width="18" height="15" fill="#fff" stroke={INK} strokeWidth="1.2" /><Rect x={1} y={11} w={18} h={7} /><path d="M7 3v15M13 3v15M1 7h18M1 11h18M1 14.5h18" stroke={INK} /></>,
  <text x="10" y="17" fontSize="18" fontWeight="700" fill="#1f7fc7" textAnchor="middle" fontFamily="Liberation Sans">R</text>,

  <text x="10" y="15" fontSize="16" fontWeight="700" fill="#1f7fc7" textAnchor="middle" fontFamily="Liberation Sans">Py</text>,
  <>{axis}<path d="M3 4h11M3 10h8M3 14h6" stroke={INK} /><circle cx="16" cy="4" r="2" fill={BLUE} /><circle cx="12" cy="10" r="1.5" fill="#bdbbb9" /></>,
  <><Rect x={1} y={8} w={6} h={4} c={BLUE} /><path d="M7 10h3M10 4v12M10 4h2M10 10h2M10 16h2" stroke={INK} /><Rect x={12} y={1.5} w={6} h={4} c={BLUE} /><Rect x={12} y={8} w={6} h={4} c={BLUE} /><Rect x={12} y={14.5} w={6} h={4} c={BLUE} /></>,
  <path d="M1 3h18v12H8l-4 4v-4H1z" stroke="#1f7fc7" strokeWidth="1.2" fill="#fff" />,
  <><path d="M4 2h9l4 4v13H4V8" stroke="#323130" fill="#fff" /><path d="M13 2v4h4" stroke="#323130" /><path d="M7 9h7M8 13h6" stroke={BLUE} strokeWidth="1.2" /><circle cx="3" cy="5" r="1.8" fill={BLUE} /></>,
  <><path d="M5 2h10v7a5 5 0 0 1-10 0z" stroke="#323130" fill={LIGHT} strokeWidth="1.1" /><path d="M5 4H1c0 4 2 5 4 5M15 4h4c0 4-2 5-4 5M10 14v2M6 18l2-2h4l2 2z" stroke="#323130" /></>,

  <><path d="M3 1h10l4 4v14H3z" stroke="#323130" strokeWidth="1.2" fill="#fff" /><path d="M13 1v4h4" stroke="#323130" /><Rect x={6} y={14} w={2} h={3} c="#323130" /><Rect x={9} y={11} w={2} h={6} c="#323130" /><Rect x={12} y={8} w={2} h={9} c="#323130" /></>,
  <><rect x="2" y="4" width="17" height="14" stroke={INK} fill="#fff" /><text x="11" y="14" fontSize="7.5" fill={BLUE} textAnchor="middle" fontFamily="Liberation Sans">123</text><path d="M5 0h5L7 4h3L3 10l1.5-4H2z" fill="#f5b041" stroke="#d67f2c" strokeWidth="0.6" /></>,
  <><rect x="8" y="2" width="10" height="7" stroke="#a19f9d" fill="#fff" /><rect x="2" y="11" width="6" height="7" stroke="#a19f9d" fill="#fff" /><path d="M9 11h11l-4 4v5l-3-1v-4z" stroke="#323130" fill="#fff" /><path d="M4 0h5L6 4h3L2 10l1.5-4H1z" fill="#f5b041" stroke="#d67f2c" strokeWidth="0.6" /></>,
  <><rect x="2" y="2" width="16" height="16" fill="#dcebf7" stroke="#3b6e9a" strokeWidth="1.3" /><path d="M9 18c0-5 2-7 9-8V6c-6 0-10 3-11 12z" fill={BLUE} /><path d="M1 1h6v5l-3 4-3-4z" fill="#d97a2b" /><circle cx="16" cy="16" r="2.6" fill="#d9541e" /></>,
  <><path d="M10 1l9 9-9 9-9-9z" stroke="#9c4fb8" strokeWidth="1.4" fill="#fff" /><path d="M10 5l5 5-5 5-5-5z" stroke="#9c4fb8" /></>,
  <><path d="M1 3h8l7 7-7 7H1l7-7z" stroke="#2f86d0" strokeWidth="1.2" fill="#fff" /><path d="M9 3h8l2 2-7 5z" fill="#fff" stroke="#2f86d0" /></>,
];

const fields = ['Categoría', 'Distribuidor', 'ID de Producto', 'Línea de Produ...', 'Nombre del Pr...', 'País de Origen'];

export default function App() {
  return (
    <>
      <GlobalStyle />
      <Page>
        <TitleBar>
          <QuickIcon viewBox="0 0 18 18" $gap={15}>
            <path d="M2 2h12l2 2v12H2zM5 2v5h8V2M5 16v-6h8v6" />
          </QuickIcon>
          <QuickIcon viewBox="0 0 18 18" $gap={14}>
            <path d="M3 2v6h6M3 8c3-4 8-4 10-1 3 4 0 7-4 10" />
          </QuickIcon>
          <QuickIcon viewBox="0 0 18 18" $gap={8} $dim>
            <path d="M15 2v6H9M15 8c-3-4-8-4-10-1-3 4 0 7 4 10" />
          </QuickIcon>
          <DocTitle>Sin título - Power BI Desktop</DocTitle>
          <Account>
            <SignIn>Iniciar sesión</SignIn>
            <Avatar viewBox="0 0 24 24">
              <circle cx="12" cy="12" r="11.5" fill="#fff" />
              <circle cx="12" cy="8" r="3.4" fill="none" stroke="#3b3a39" strokeWidth="1.4" />
              <path d="M5.5 13h13v2c0 3-3 5-6.5 5s-6.5-2-6.5-5z" fill="none" stroke="#3b3a39" strokeWidth="1.4" />
            </Avatar>
            <WinIcon viewBox="0 0 14 14" $gap={33}><path d="M1 7h12" /></WinIcon>
            <WinIcon viewBox="0 0 14 14" $gap={33}><rect x="2" y="4" width="8" height="9" rx="1.5" /><path d="M4.5 4V2.5C4.5 1.5 5 1 6 1h4c2 0 3 1 3 3v5c0 1-.5 1.5-1.5 1.5H10" /></WinIcon>
            <WinIcon viewBox="0 0 14 14" $gap={16}><path d="M1 1l12 12M13 1L1 13" /></WinIcon>
          </Account>
        </TitleBar>

        <Header>
          <TabRow>
            {tabs.map(([label, w]) => (
              <Tab key={label} $w={w}>
                <TabLabel $active={label === 'Inicio'}>{label}</TabLabel>
              </Tab>
            ))}
            <ShareButton>
              <svg width="17" height="16" viewBox="0 0 17 16" fill="none" stroke="#fff" strokeWidth="1.1">
                <path d="M7 3H1.5v11.5h12V10M10 1l5.5 4.5L10 10V7.5C7 7.5 5 9 4 11c0-4 2-6.5 6-6.5z" />
              </svg>
              Compartir
              <svg width="11" height="7" viewBox="0 0 11 7" fill="none" stroke="#fff" strokeWidth="1.1"><path d="M1 1l4.5 5L10 1" /></svg>
            </ShareButton>
          </TabRow>
          <Ribbon>
            <Group $w={174}>
              <GroupRow>
                <BigButton $w={46} $off>
                  <BigIcon viewBox="0 0 36 36">{ribbonIcons.paste}</BigIcon>
                  <BigLabel>Pegar</BigLabel>
                </BigButton>
                <SmallStack>
                  <SmallButton>
                    <SmallIcon viewBox="0 0 16 18" stroke="#a19f9d"><path d="M5 1l6 11M11 1L5 12" /><circle cx="4" cy="14.5" r="2" stroke={BLUE} /><circle cx="12" cy="14.5" r="2" stroke={BLUE} /></SmallIcon>
                    Cortar
                  </SmallButton>
                  <SmallButton>
                    <SmallIcon viewBox="0 0 16 18" stroke="#b5b3b1"><path d="M4 14H1V2h7l1 1" /><path d="M5 5h6l4 4v8H5zM7 11h6M7 14h6" /></SmallIcon>
                    Copia
                  </SmallButton>
                  <SmallButton>
                    <SmallIcon viewBox="0 0 16 18" stroke="#e6c9a4"><path d="M1 10l6-2 4 5-5 4z" fill="#f3dcc0" /><path d="M8 8l6-7 2 2-6 8" stroke="#c8c6c4" /></SmallIcon>
                    Copiar formato
                  </SmallButton>
                </SmallStack>
              </GroupRow>
              <GroupLabel>Portapapeles</GroupLabel>
            </Group>

            {groups.map(g => (
              <Group key={g.name} $w={g.w}>
                <GroupRow>
                  {g.buttons.map(b => <Big key={b.icon} {...b} />)}
                </GroupRow>
                <GroupLabel>{g.name}</GroupLabel>
              </Group>
            ))}
            <Collapse>
              <CollapseIcon viewBox="0 0 10 7"><path d="M1 6l4-4 4 4" /></CollapseIcon>
            </Collapse>
          </Ribbon>
        </Header>

        <Body>
          <Rail>
            <RailItem $active>
              <RailIcon viewBox="0 0 22 22"><path d="M2 2v18h18" /><path d="M5 8h2.5v10H5zM9.5 12H12v6H9.5zM14 6h2.5v12H14zM18 4h2v14h-2z" strokeWidth="1.2" /></RailIcon>
            </RailItem>
            <RailItem>
              <RailIcon viewBox="0 0 22 22"><rect x="2" y="3" width="18" height="16" /><path d="M2 7h18M2 11h18M2 15h18M8 7v12M14 7v12" /></RailIcon>
            </RailItem>
            <RailItem>
              <RailIcon viewBox="0 0 22 22"><path d="M2 8h7v8H2zM2 12h7M11 2h9v6h-9zM11 8h9v6h-9zM11 14h9v6h-9zM9 10h2" /></RailIcon>
            </RailItem>
            <RailItem>
              <RailIcon viewBox="0 0 22 22">
                <path d="M6 13V4h8l4 4v11h-1M14 4v4h4" />
                <text x="10" y="19" fontSize="7" fontWeight="700" fill="#605e5c" stroke="none" textAnchor="middle" fontFamily="Liberation Sans">DAX</text>
              </RailIcon>
            </RailItem>
          </Rail>

          <Canvas>
            <VisualTitle $left={11}>Suma de ID de Producto por Categoría</VisualTitle>
            <Charts>
              <PieChart />
              <BarVisual>
                <VisualTitle $left={22}>Suma de ID de Producto por Categoría</VisualTitle>
                <BarChart />
              </BarVisual>
            </Charts>
            <PageEnd />
          </Canvas>

          <FilterPane>
            <PaneHead $left={12}>
              <HeadIcon viewBox="0 0 18 18" $size={19} $gap={8}><path d="M1 2h16l-6.5 7.5V17h-3V9.5z" /></HeadIcon>
              Filtros
              <HeadIcon viewBox="0 0 16 16" $push $gap={18}>
                <path d="M1 9c3-6 11-6 14 0" /><circle cx="8" cy="9.5" r="2.2" />
              </HeadIcon>
              <Chevrons />
            </PaneHead>
            <FilterSearch><Lens flip />Buscar</FilterSearch>
            <Divider />
            <FilterHeading $top={17}>Filtros de esta página<HeadingDots>...</HeadingDots></FilterHeading>
            <FilterCard>Agregar campos de datos a...</FilterCard>
            <FilterHeading $top={26}>Filtros de todas las páginas<HeadingDots>...</HeadingDots></FilterHeading>
            <FilterCard>Agregar campos de datos a...</FilterCard>
          </FilterPane>

          <VizPane>
            <PaneHead $left={9} $right={8}>
              Visualizaciones
              <Chevrons push />
            </PaneHead>
            <Subhead>Compilar visual</Subhead>
            <ModeTabs>
              <ModeTile>
                <ModeIcon viewBox="0 0 28 28" $size={28}>
                  <path d="M2 3h22" stroke="#5b5a59" strokeWidth="1.6" />
                  <rect x="2" y="7" width="24" height="8" fill={GREEN} stroke="#323130" strokeDasharray="1.5 1.5" />
                  <rect x="2" y="18" width="24" height="8" fill={GREEN} stroke="#323130" strokeDasharray="1.5 1.5" />
                </ModeIcon>
              </ModeTile>
              <ModeIcon viewBox="0 0 28 28" $size={28} $left={41} stroke="#252423" strokeWidth="1.2">
                <path d="M7 25H2V2h13l5 5v5M15 2v5h5" />
                <path d="M11 25c3 1 6 1 7-2l8-10-2-1-9 8c-2 0-4 2-4 5z" />
              </ModeIcon>
            </ModeTabs>
            <Notch viewBox="0 0 194 10"><path d="M0 9.5h17l9-8 9 8h159" /></Notch>
            <Gallery>
              {gallery.map((icon, i) => (
                <GalleryIcon key={i} viewBox="0 0 20 20">{icon}</GalleryIcon>
              ))}
            </Gallery>
            <MoreDots>...</MoreDots>
            <WellsRule />
            <WellLabel $top={8}>Valores</WellLabel>
            <Well $top={5} $h={31} $pad={10}>Agregar campos de datos a...</Well>
            <WellLabel $bold $top={12}>Obtener detalles</WellLabel>
            <SwitchRow $top={10}>
              <SwitchText>Entre varios informes</SwitchText>
              <Switch />
            </SwitchRow>
            <SwitchRow $top={10}>
              <SwitchText $wrap>Mantener todos los filtros</SwitchText>
              <Switch $on>
                <SwitchCheck viewBox="0 0 10 9"><path d="M1 5l3 3 5-6" /></SwitchCheck>
              </Switch>
            </SwitchRow>
            <Well $top={10} $h={28} $pad={8}>Agregue los campos de ob...</Well>
          </VizPane>

          <DataPane>
            <PaneHead $left={9} $right={6}>
              Datos
              <Chevrons push />
            </PaneHead>
            <DataSearch><Lens />Buscar</DataSearch>
            <TableRow>
              <TreeIcon viewBox="0 0 14 14" $gap={4}><path d="M1 4l6 6 6-6" /></TreeIcon>
              <TreeIcon viewBox="0 0 14 14" $gap={5}><rect x="1" y="1.5" width="12" height="11" rx="1" /><path d="M1 5h12M1 9h12M5 1.5v11M9 1.5v11" /></TreeIcon>
              Productos de Confitería
            </TableRow>
            {fields.map(f => (
              <FieldRow key={f}>
                <Check />
                <SigmaSlot>{f === 'ID de Producto' ? '∑' : ''}</SigmaSlot>
                {f}
              </FieldRow>
            ))}
          </DataPane>
        </Body>
      </Page>
    </>
  );
}
